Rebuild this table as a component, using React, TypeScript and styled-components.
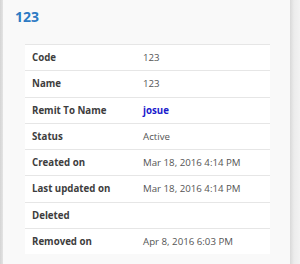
import React from "react";
import styled, { createGlobalStyle } from "styled-components";

const GlobalStyle = createGlobalStyle`
  html, body {
    margin: 0;
    padding: 0;
    background: #f0f0f0;
  }
  body {
    font-family: "Open Sans", "Liberation Sans", sans-serif;
  }
`;

interface Row {
  label: string;
  value: string;
  link?: boolean;
}

const rows: Row[] = [
  { label: "Code", value: "123" },
  { label: "Name", value: "123" },
  { label: "Remit To Name", value: "josue", link: true },
  { label: "Status", value: "Active" },
  { label: "Created on", value: "Mar 18, 2016 4:14 PM" },
  { label: "Last updated on", value: "Mar 18, 2016 4:14 PM" },
  { label: "Deleted", value: "" },
  { label: "Removed on", value: "Apr 8, 2016 6:03 PM" }
];

const App = () => {
  return (
    <>
      <GlobalStyle />
      <Page>
        <EdgeBar />
        <Panel>
          <Title>123</Title>
          <Table>
            <tbody>
              {rows.map(row => (
                <tr key={row.label}>
                  <Label>{row.label}</Label>
                  <Value link={row.link}>{row.value}</Value>
                </tr>
              ))}
            </tbody>
          </Table>
        </Panel>
        <Shadow />
      </Page>
    </>
  );
};

export default App;

const Page = styled.div`
  display: flex;
  width: 300px;
  height: 264px;
  overflow: hidden;
`;

const EdgeBar = styled.div`
  width: 3px;
  background: linear-gradient(to right, #d4d4d4, #e4e4e4);
`;

const Panel = styled.div`
  width: 287px;
  background: #f9f9f9;
  padding: 7px 0 0 0;
  box-sizing: border-box;
`;

const Shadow = styled.div`
  flex: 1;
  background: linear-gradient(to right, #d9d9d9, #ececec 40%, #f3f3f3);
`;

const Title = styled.div`
  margin-left: 12px;
  font-size: 14px;
  font-weight: 700;
  color: #2d7bc4;
  line-height: 20px;
  height: 37px;
`;

const Table = styled.table`
  margin-left: 22px;
  width: 245px;
  border-collapse: collapse;
  background: #fff;
  font-size: 9.7px;
`;

const Label = styled.td`
  width: 111px;
  padding: 0 0 0 7px;
  height: 25.25px;
  border-top: 1px solid #e6e6e6;
  font-weight: 700;
  color: #3d3d3d;
`;

const Value = styled.td<{ link?: boolean }>`
  padding: 0;
  height: 25.25px;
  border-top: 1px solid #e6e6e6;
  color: ${props => (props.link ? "#1a1acc" : "#555")};
  font-weight: ${props => (props.link ? 700 : 400)};
`;
